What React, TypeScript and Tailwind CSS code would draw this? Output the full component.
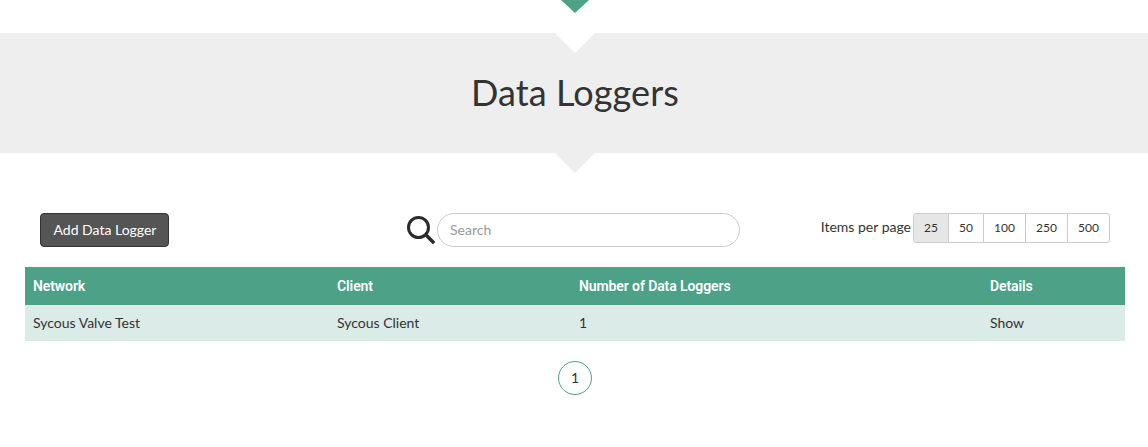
const pageSizes = ['25', '50', '100', '250', '500'];
const sizeWidths = ['w-[34px]', 'w-[35px]', 'w-[42px]', 'w-[42px]', 'w-[42px]'];

function Arrow({ className }: { className: string }) {
  return <div className={`absolute w-0 h-0 border-x-transparent ${className}`} />;
}

function SearchIcon() {
  return (
    <svg width="28" height="28" viewBox="0 0 28 28" fill="none" stroke="#2b2b2b" className="shrink-0">
      <circle cx="11.5" cy="11.5" r="10" strokeWidth="3" />
      <line x1="19" y1="19" x2="26" y2="26" strokeWidth="3.6" strokeLinecap="round" />
    </svg>
  );
}

export default function App() {
  return (
    <div className="relative min-h-[447px] bg-white text-[#333] font-['Lato',sans-serif] text-sm overflow-hidden">
      <Arrow className="top-0 left-[561px] border-x-[14px] border-t-[13px] border-t-[#4ca187]" />

      {/* Title band */}
      <div className="relative mt-[33px] h-[120px] bg-[#eeeeee] flex items-center justify-center pl-[2px]">
        <Arrow className="top-0 left-[555px] border-x-[20px] border-t-[20px] border-t-white" />
        <h1 className="text-[36px] leading-none tracking-[0.1px] text-[#333] pb-[2px]">Data Loggers</h1>
        <Arrow className="top-full left-[555px] border-x-[20px] border-t-[20px] border-t-[#eeeeee]" />
      </div>

      <main className="mt-[60px] pl-[25px] pr-[23px]">
        {/* Toolbar */}
        <div className="flex items-start px-[15px]">
          <button className="w-[129px] h-[34px] pl-[1px] bg-[#555] border border-[#333] rounded text-white text-sm">
            Add Data Logger
          </button>
          <div className="ml-[238px] flex items-center gap-[2px]">
            <SearchIcon />
            <input
              placeholder="Search"
              className="w-[303px] h-[34px] border border-[#ccc] rounded-full px-3 pb-[2px] text-sm outline-none placeholder:text-[#999]"
            />
          </div>
          <div className="ml-auto flex items-center">
            <span className="mr-[2px] pb-[2px]">Items per page</span>
            <div className="flex h-[30px] border border-[#ccc] rounded-[3px] text-xs">
              {pageSizes.map((size, i) => (
                <div
                  key={size}
                  className={`flex items-center justify-center ${sizeWidths[i]} ${i > 0 ? 'border-l border-[#ccc]' : 'bg-[#e6e6e6]'}`}
                >
                  {size}
                </div>
              ))}
            </div>
          </div>
        </div>

        {/* Table */}
        <table className="mt-[20px] w-[1100px] table-fixed border-collapse">
          <colgroup>
            <col className="w-[304px]" />
            <col className="w-[242px]" />
            <col className="w-[411px]" />
            <col className="w-[143px]" />
          </colgroup>
          <thead>
            <tr className="h-[38px] bg-[#4ca187] text-white font-['Roboto',sans-serif] text-left tracking-[-0.1px]">
              <th className="px-2 font-semibold">Network</th>
              <th className="px-2 font-semibold">Client</th>
              <th className="px-2 font-semibold">Number of Data Loggers</th>
              <th className="px-2 font-semibold">Details</th>
            </tr>
          </thead>
          <tbody>
            <tr className="h-[36px] bg-[#dbebe7]">
              <td className="px-2">Sycous Valve Test</td>
              <td className="px-2">Sycous Client</td>
              <td className="px-2">1</td>
              <td className="px-2">Show</td>
            </tr>
          </tbody>
        </table>

        {/* Pagination */}
        <div className="mt-[20px] flex justify-center">
          <div className="w-[34px] h-[34px] rounded-full border border-[#4ca187] flex items-center justify-center text-sm">
            1
          </div>
        </div>
      </main>
    </div>
  );
}
